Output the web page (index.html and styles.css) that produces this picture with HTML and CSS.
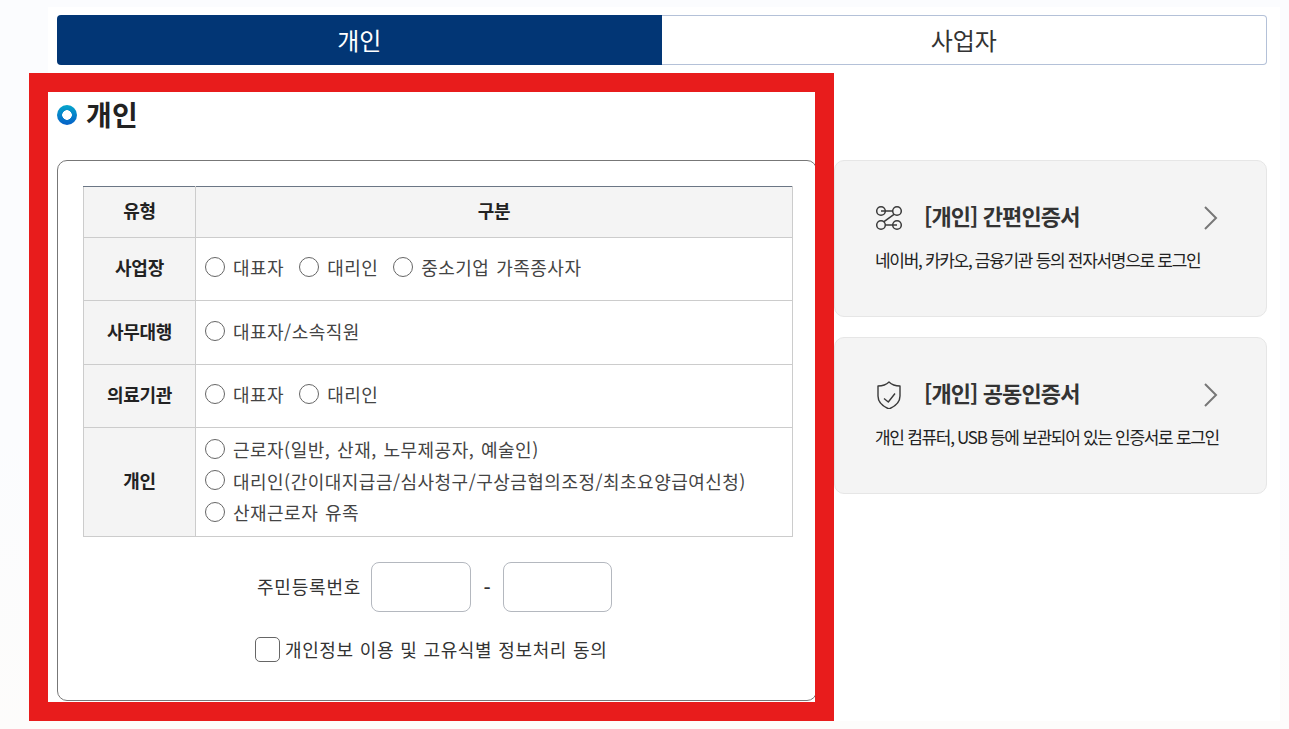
FILE: index.html
```html
<!DOCTYPE html>
<html lang="ko">
<head>
<meta charset="utf-8">
<title>개인</title>
<link rel="stylesheet" href="styles.css">
</head>
<body>
<div class="page">
  <nav class="tabs">
    <a class="tab tab-on">개인</a>
    <a class="tab">사업자</a>
  </nav>
  <div class="content">
    <section class="main">
      <h2 class="title"><span class="bullet"></span>개인</h2>
      <div class="card">
        <table class="grid">
          <colgroup><col class="col-a"><col></colgroup>
          <tr class="r-head"><th>유형</th><th>구분</th></tr>
          <tr class="r1"><th>사업장</th><td>
            <div class="opts"><label class="opt"><span class="radio"></span>대표자</label><label class="opt"><span class="radio"></span>대리인</label><label class="opt"><span class="radio"></span>중소기업 가족종사자</label></div>
          </td></tr>
          <tr class="r2"><th>사무대행</th><td>
            <div class="opts"><label class="opt"><span class="radio"></span>대표자/소속직원</label></div>
          </td></tr>
          <tr class="r3"><th>의료기관</th><td>
            <div class="opts"><label class="opt"><span class="radio"></span>대표자</label><label class="opt"><span class="radio"></span>대리인</label></div>
          </td></tr>
          <tr class="r4"><th>개인</th><td>
            <label class="opt line"><span class="radio"></span>근로자(일반, 산재, 노무제공자, 예술인)</label>
            <label class="opt line"><span class="radio"></span>대리인(간이대지급금/심사청구/구상금협의조정/최초요양급여신청)</label>
            <label class="opt line"><span class="radio"></span>산재근로자 유족</label>
          </td></tr>
        </table>
        <div class="idrow">
          <span class="idlabel">주민등록번호</span>
          <span class="field f1"></span>
          <span class="dash">-</span>
          <span class="field f2"></span>
        </div>
        <label class="agree"><span class="check"></span>개인정보 이용 및 고유식별 정보처리 동의</label>
      </div>
    </section>
    <aside class="side">
      <a class="cert">
        <div class="cert-head">
          <svg class="cert-icon" viewBox="0 0 28 28" fill="none" stroke="#3a3a3a" stroke-width="1.5">
            <circle cx="6" cy="7" r="4.300"/><circle cx="22" cy="7" r="4.300"/><circle cx="6" cy="21" r="4.300"/><circle cx="22" cy="21" r="4.300"/>
            <path d="M6 7h11.700M10.300 21H22M19 10.300 9 17.700"/>
          </svg>
          <strong class="cert-title">[개인] 간편인증서</strong>
          <svg class="chev" viewBox="0 0 16 26" fill="none" stroke="#777" stroke-width="2"><path d="M2 2l11 11L2 24"/></svg>
        </div>
        <p class="cert-desc">네이버, 카카오, 금융기관 등의 전자서명으로 로그인</p>
      </a>
      <a class="cert">
        <div class="cert-head">
          <svg class="cert-icon" viewBox="0 0 28 28" fill="none" stroke="#3a3a3a" stroke-width="1.400" stroke-linejoin="round">
            <path d="M14 1C17 4 21 5 25 5V15C25 21.500 20 25.500 14 28 8 25.500 3 21.500 3 15V5C7 5 11 4 14 1Z"/><path d="M9 17.500 13.300 21 20 12.500"/>
          </svg>
          <strong class="cert-title">[개인] 공동인증서</strong>
          <svg class="chev" viewBox="0 0 16 26" fill="none" stroke="#777" stroke-width="2"><path d="M2 2l11 11L2 24"/></svg>
        </div>
        <p class="cert-desc">개인 컴퓨터, USB 등에 보관되어 있는 인증서로 로그인</p>
      </a>
    </aside>
  </div>
  <div class="mark"></div>
</div>
</body>
</html>
```
FILE: styles.css
```css
* { box-sizing: border-box; }
html, body { margin: 0; height: 100%; }
body {
  background: #fdfcfb;
  color: #222;
  font-family: "Noto Sans CJK KR", "Noto Sans", sans-serif;
  overflow: hidden;
}
.page {
  position: relative;
  width: 1289px;
  height: 729px;
  padding: 15px 22px 0 57px;
  background:
    linear-gradient(#fff, #fff) 48px 7px / 1232px 714px no-repeat,
    linear-gradient(#fbfcfe 0, #fbfcfe 60%, #fdfcfb 100%);
}
.tabs { display: flex; height: 50px; }
.tab {
  flex: 1;
  display: flex;
  align-items: center;
  justify-content: center;
  padding-bottom: 2px;
  font-size: 24px;
  color: #333;
  background: #fff;
  border: 1px solid #b4c1d8;
  border-left: 0;
  border-radius: 0 4px 4px 0;
}
.tab-on {
  color: #fff;
  background: #023675;
  border: 0;
  border-radius: 4px 0 0 4px;
}
.content { display: flex; gap: 17px; padding-top: 27px; }
.main { width: 760px; flex: none; }
.title {
  display: flex;
  align-items: center;
  height: 46px;
  margin: 0 0 22px;
  padding-bottom: 2px;
  font-size: 28px;
  font-weight: 700;
  line-height: 44px;
  letter-spacing: .3px;
  color: #222;
}
.bullet {
  width: 20px;
  height: 20px;
  margin: 2px 9px 0 0;
  border-radius: 50%;
  background:
    radial-gradient(circle, #fff 0 4.500px, transparent 5px),
    linear-gradient(#06a5cb, #0560c8);
}
.card {
  height: 541px;
  padding: 25px 25px 0;
  background: #fff;
  border: 1px solid #777;
  border-radius: 10px;
}
.grid {
  width: 710px;
  border-collapse: collapse;
  table-layout: fixed;
  font-size: 18px;
  border-top: 1px solid #6b7685;
}
.col-a { width: 112px; }
.grid th, .grid td { border: 1px solid #ccc; padding: 0; }
.grid tr:first-child th { border-top: 1px solid #6b7685; }
.grid th {
  padding-bottom: 4px;
  background: #f4f4f4;
  font-size: 18px;
  font-weight: 700;
  color: #222;
  letter-spacing: -0.3px;
}
.grid td { padding-left: 9px; color: #444; }
.r-head { height: 51px; }
.r1 { height: 63px; }
.r2 { height: 64px; }
.r3 { height: 63px; }
.r4 { height: 109px; }
.opts { display: flex; gap: 15px; }
.opt {
  display: flex;
  align-items: center;
  font-size: 18px;
  height: 31px;
  color: #444;
  letter-spacing: .48px;
  word-spacing: 1.3px;
  white-space: nowrap;
}
.line { height: 31.5px; padding-bottom: 3px; }
.opts .opt { padding-bottom: 4px; }
.radio {
  width: 20px;
  height: 20px;
  margin-right: 8px;
  border: 1px solid #666;
  border-radius: 50%;
  background: #fff;
  flex: none;
  position: relative;
  top: -0.5px;
}
.opts .radio { top: 0; }
.idrow {
  display: flex;
  align-items: center;
  height: 50px;
  margin-top: 25px;
  padding-left: 174px;
  font-size: 18px;
  color: #333;
}
.idlabel { width: 114px; padding-bottom: 2px; letter-spacing: .8px; white-space: nowrap; }
.field {
  height: 50px;
  border: 1px solid #b4b8bf;
  border-radius: 8px;
  background: #fff;
}
.f1 { width: 100px; }
.f2 { width: 109px; }
.dash { width: 32px; text-align: center; font-size: 20px; font-weight: 500; }
.agree {
  display: flex;
  align-items: center;
  height: 26px;
  margin-top: 24px;
  padding-left: 172px;
  font-size: 18px;
  color: #333;
  letter-spacing: .6px;
  word-spacing: .5px;
}
.check {
  width: 25px;
  height: 25px;
  margin-right: 5px;
  border: 1px solid #666;
  border-radius: 5px;
  background: #fff;
}
.side {
  flex: 1;
  min-width: 0;
  display: flex;
  flex-direction: column;
  gap: 20px;
  padding-top: 68px;
}
.cert {
  display: block;
  height: 157px;
  padding: 41px 40px 0;
  background: #f4f4f4;
  border: 1px solid #e6e6e6;
  border-radius: 10px;
}
.cert-head { display: flex; align-items: center; height: 32px; }
.cert-icon { width: 28px; height: 28px; flex: none; margin-right: 21px; }
.cert-title {
  margin-bottom: 6px;
  font-size: 22px;
  font-weight: 700;
  color: #333;
  letter-spacing: -0.9px;
  white-space: nowrap;
}
.chev { width: 16px; height: 26px; margin-left: auto; margin-right: 7px; }
.cert-desc {
  margin: 12px 0 0;
  font-size: 17px;
  line-height: 28px;
  color: #222;
  letter-spacing: -1.3px;
  white-space: nowrap;
}
.mark {
  position: absolute;
  left: 29px;
  top: 73px;
  width: 805px;
  height: 648px;
  border: 19px solid #e81c1c;
  pointer-events: none;
}
```
